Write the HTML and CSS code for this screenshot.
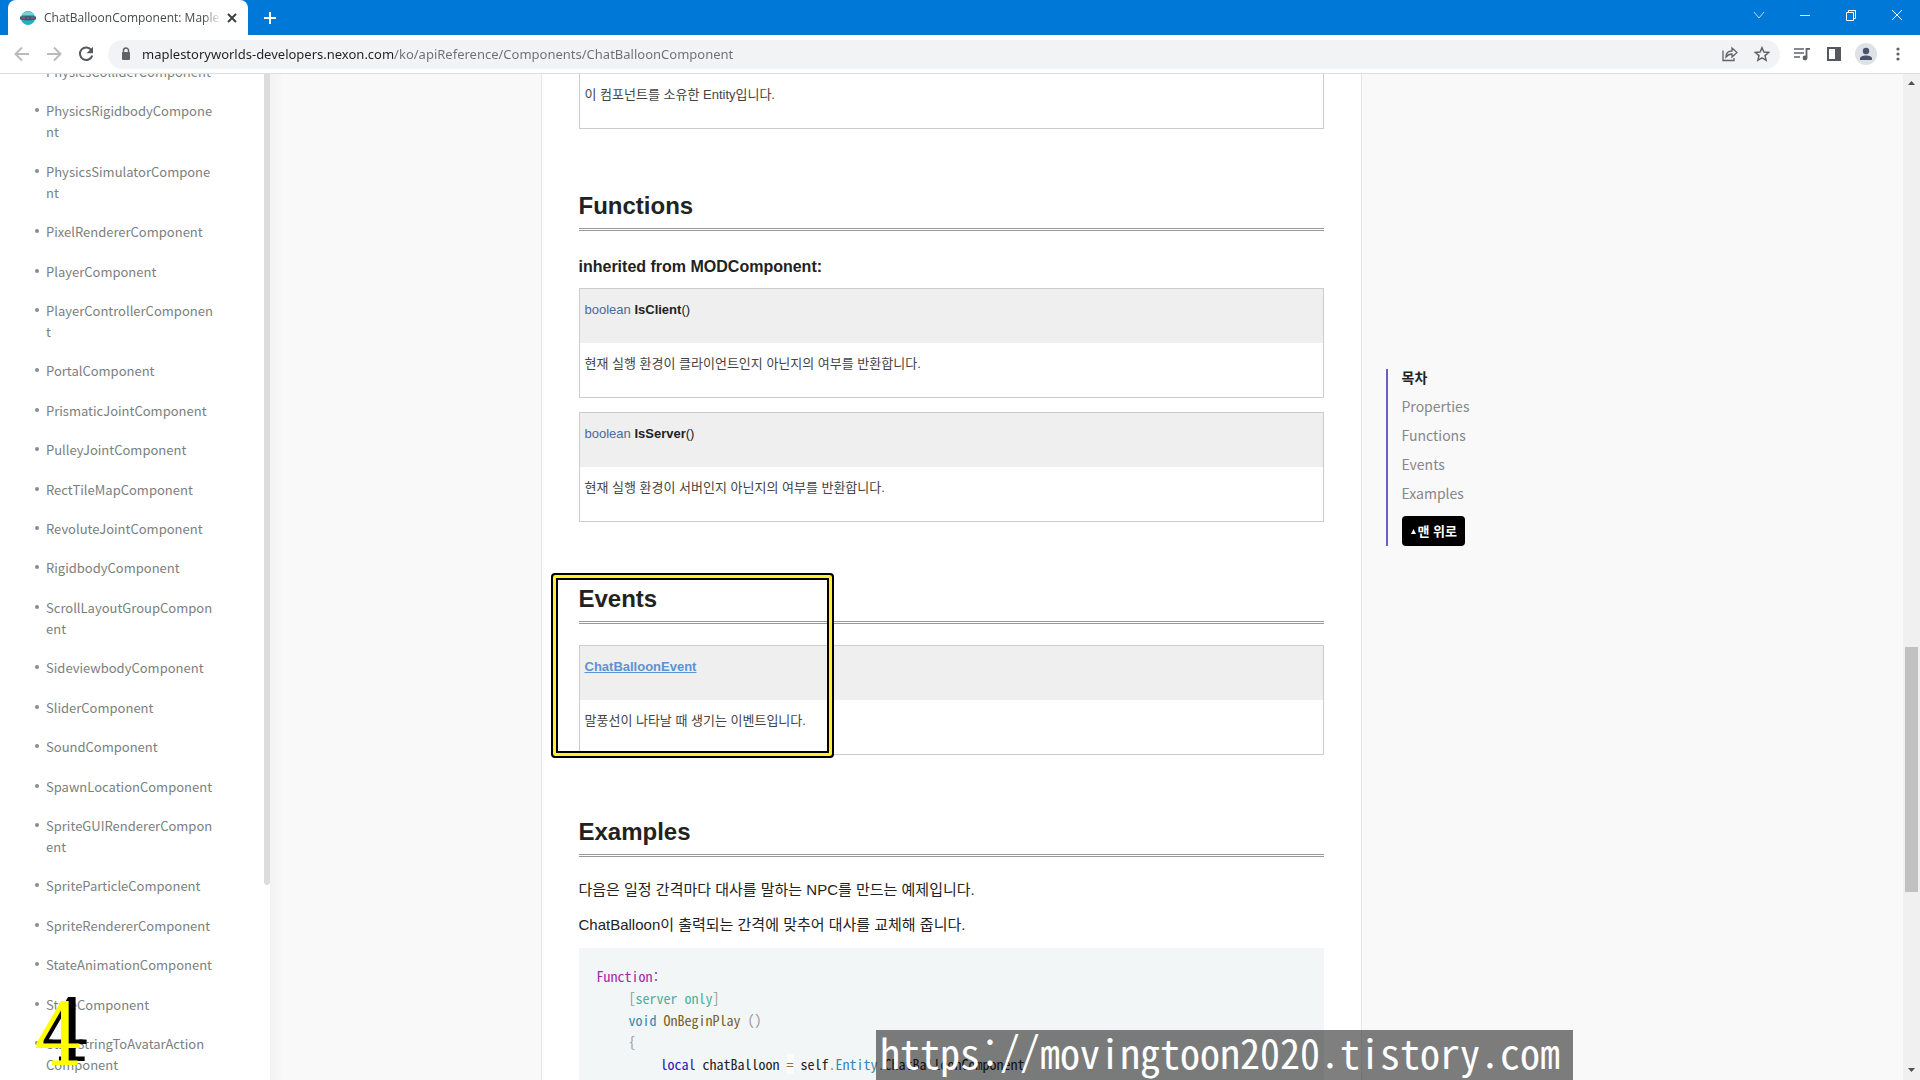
FILE: index.html
```html
<!DOCTYPE html>
<html lang="ko">
<head>
  <meta charset="UTF-8" />
  <meta name="viewport" content="width=device-width, initial-scale=1" />
  <title>ChatBalloonComponent: MapleStory Worlds</title>
  <link rel="stylesheet" href="styles.css">
</head>
<body>
  <header class="browser">
    <div class="titlebar">
      <div class="tab">
        <svg class="favicon" width="16" height="16" viewBox="0 0 16 16">
          <circle cx="8" cy="8" r="7" fill="#1fb4c4"/>
          <path d="M2 5a7 7 0 0 1 12 0z" fill="#6fd6c8"/>
          <path d="M0 6.500q8-1 16 0v3q-8 2-16 0z" fill="#3f5a73"/>
          <path d="M2 8h3M7 8h2M11 8h3" stroke="#8a5570" stroke-width="2"/>
        </svg>
        <span class="tab-title">ChatBalloonComponent: MapleS</span>
        <button class="tab-close" aria-label="탭 닫기">
          <svg width="10" height="10" viewBox="0 0 10 10"><path d="M1 1l8 8M9 1l-8 8" stroke="#3c4043" stroke-width="2"/></svg>
        </button>
      </div>
      <button class="new-tab" aria-label="새 탭">
        <svg width="12" height="12" viewBox="0 0 12 12"><path d="M6 0v12M0 6h12" stroke="#fff" stroke-width="2"/></svg>
      </button>
      <div class="window-buttons">
        <button aria-label="탭 검색"><svg width="12" height="12" viewBox="0 0 12 12"><path d="M1 3l5 6 5-6" fill="none" stroke="#b9dcf8"/></svg></button>
        <button aria-label="최소화"><svg width="12" height="12" viewBox="0 0 12 12"><path d="M1 6.500h10" stroke="#d5eafb"/></svg></button>
        <button aria-label="이전 크기로 복원"><svg width="12" height="12" viewBox="0 0 12 12"><path d="M1.500 3.500h7v8h-7zM3.500 3.500v-2h7v8h-2" fill="none" stroke="#fff"/></svg></button>
        <button aria-label="닫기"><svg width="12" height="12" viewBox="0 0 12 12"><path d="M1 1l10 10M11 1L1 11" stroke="#fff"/></svg></button>
      </div>
    </div>
    <div class="toolbar">
      <button class="tool" aria-label="뒤로"><svg width="16" height="16" viewBox="0 0 16 16"><path d="M15 8H2M8 1.500L1.500 8 8 14.500" fill="none" stroke="#b8babc" stroke-width="2"/></svg></button>
      <button class="tool" aria-label="앞으로"><svg width="16" height="16" viewBox="0 0 16 16"><path d="M1 8h13M8 1.500L14.500 8 8 14.500" fill="none" stroke="#b8babc" stroke-width="2"/></svg></button>
      <button class="tool" aria-label="새로고침"><svg width="16" height="16" viewBox="0 0 16 16"><path d="M13.500 4.200A6.300 6.300 0 1 0 14.300 9.500" fill="none" stroke="#55585c" stroke-width="2"/><path d="M15 .8v6.400H8.600z" fill="#55585c"/></svg></button>
      <div class="address">
        <svg width="16" height="16" viewBox="0 0 16 16"><rect x="4" y="6" width="8" height="8" rx="1" fill="#5f6368"/><path d="M5.500 7V4.500a2.500 2.500 0 0 1 5 0V7" fill="none" stroke="#5f6368" stroke-width="1.500"/></svg>
        <input class="url" type="text" aria-label="주소창" value="maplestoryworlds-developers.nexon.com/ko/apiReference/Components/ChatBalloonComponent">
        <button class="tool" aria-label="공유"><svg width="16" height="16" viewBox="0 0 16 16"><path d="M1 4.500v10h11V12M4 11c0-4 2-6 6-6V2l5 4.500-5 4.500V8c-3 0-4.500 1-6 3z" fill="none" stroke="#5f6368" stroke-width="1.300"/></svg></button>
        <button class="tool" aria-label="북마크"><svg width="16" height="16" viewBox="0 0 16 16"><path d="M8 1.700l1.900 4.400 4.700.4-3.600 3.100 1.100 4.700L8 11.800l-4.100 2.500L5 9.600 1.400 6.500l4.700-.4z" fill="none" stroke="#5f6368" stroke-width="1.500"/></svg></button>
      </div>
      <button class="tool" aria-label="미디어"><svg width="16" height="16" viewBox="0 0 16 16"><path d="M0 3h10M0 7h10M0 11h6" stroke="#5f6368" stroke-width="1.600"/><path d="M16 2.800h-3.500v9" fill="none" stroke="#5f6368" stroke-width="1.800"/><circle cx="11" cy="12" r="2.400" fill="#5f6368"/></svg></button>
      <button class="tool" aria-label="측면 패널"><svg width="16" height="16" viewBox="0 0 16 16"><path d="M1 1h14v14H1zM3 3v10h6V3z" fill="#55585f" fill-rule="evenodd"/></svg></button>
      <button class="tool" aria-label="프로필"><svg width="22" height="22" viewBox="0 0 22 22"><circle cx="11" cy="11" r="11" fill="#dee1e6"/><circle cx="11" cy="8" r="3.200" fill="#4a5369"/><path d="M5 17v-1.500c0-4 12-4 12 0V17z" fill="#4a5369"/></svg></button>
      <button class="tool" aria-label="메뉴"><svg width="16" height="16" viewBox="0 0 16 16"><circle cx="8" cy="3" r="1.600" fill="#5f6368"/><circle cx="8" cy="8" r="1.600" fill="#5f6368"/><circle cx="8" cy="13" r="1.600" fill="#5f6368"/></svg></button>
    </div>
  </header>

  <div class="page">
    <nav class="sidebar">
      <ul>
        <li><a href="#">PhysicsColliderComponent</a></li>
        <li><a href="#">PhysicsRigidbodyComponent</a></li>
        <li><a href="#">PhysicsSimulatorComponent</a></li>
        <li><a href="#">PixelRendererComponent</a></li>
        <li><a href="#">PlayerComponent</a></li>
        <li><a href="#">PlayerControllerComponent</a></li>
        <li><a href="#">PortalComponent</a></li>
        <li><a href="#">PrismaticJointComponent</a></li>
        <li><a href="#">PulleyJointComponent</a></li>
        <li><a href="#">RectTileMapComponent</a></li>
        <li><a href="#">RevoluteJointComponent</a></li>
        <li><a href="#">RigidbodyComponent</a></li>
        <li><a href="#">ScrollLayoutGroupComponent</a></li>
        <li><a href="#">SideviewbodyComponent</a></li>
        <li><a href="#">SliderComponent</a></li>
        <li><a href="#">SoundComponent</a></li>
        <li><a href="#">SpawnLocationComponent</a></li>
        <li><a href="#">SpriteGUIRendererComponent</a></li>
        <li><a href="#">SpriteParticleComponent</a></li>
        <li><a href="#">SpriteRendererComponent</a></li>
        <li><a href="#">StateAnimationComponent</a></li>
        <li><a href="#">StateComponent</a></li>
        <li><a href="#">StateStringToAvatarAction<wbr>Component</a></li>
      </ul>
      <div class="sidebar-thumb"></div>
    </nav>

    <main class="content">
      <article class="doc">
        <div class="entry entry-open">
          <p class="entry-desc">이 컴포넌트를 소유한 Entity입니다.</p>
        </div>

        <section>
          <h2>Functions</h2>
          <h3>inherited from MODComponent:</h3>
          <div class="entry">
            <div class="entry-head"><span class="type">boolean</span> <b>IsClient</b>()</div>
            <p class="entry-desc">현재 실행 환경이 클라이언트인지 아닌지의 여부를 반환합니다.</p>
          </div>
          <div class="entry">
            <div class="entry-head"><span class="type">boolean</span> <b>IsServer</b>()</div>
            <p class="entry-desc">현재 실행 환경이 서버인지 아닌지의 여부를 반환합니다.</p>
          </div>
        </section>

        <section class="events">
          <h2>Events</h2>
          <div class="entry">
            <div class="entry-head"><a href="#">ChatBalloonEvent</a></div>
            <p class="entry-desc">말풍선이 나타날 때 생기는 이벤트입니다.</p>
          </div>
          <div class="highlight"></div>
        </section>

        <section>
          <h2>Examples</h2>
          <p class="text">다음은 일정 간격마다 대사를 말하는 NPC를 만드는 예제입니다.</p>
          <p class="text">ChatBalloon이 출력되는 간격에 맞추어 대사를 교체해 줍니다.</p>
<pre class="code"><span class="c-label">Function:</span>
	<span class="c-punc">[</span><span class="c-attr">server only</span><span class="c-punc">]</span>
	<span class="c-type">void</span> <span class="c-func">OnBeginPlay</span> <span class="c-punc">()</span>
	<span class="c-punc">{</span>
		<span class="c-key">local</span> chatBalloon <span class="c-op">=</span> self<span class="c-punc">.</span><span class="c-type">Entity</span><span class="c-punc">.</span>ChatBalloonComponent
</pre>
        </section>
      </article>

      <aside class="toc">
        <strong>목차</strong>
        <a href="#">Properties</a>
        <a href="#">Functions</a>
        <a href="#">Events</a>
        <a href="#">Examples</a>
        <button class="to-top"><svg width="5" height="5" viewBox="0 0 5 5"><path d="M2.500 0L5 5H0z" fill="#fff"/></svg>맨 위로</button>
      </aside>
    </main>

    <div class="scrollbar">
      <svg width="7" height="4" viewBox="0 0 7 4"><path d="M3.500 0L7 4H0z" fill="#505050"/></svg>
      <div class="track"><div class="thumb"></div></div>
      <svg width="7" height="4" viewBox="0 0 7 4"><path d="M0 0h7L3.500 4z" fill="#505050"/></svg>
    </div>
  </div>

  <div class="step">4</div>
  <div class="watermark">https://movingtoon2020.tistory.com</div>
</body>
</html>
```
FILE: styles.css
```css
* {
  box-sizing: border-box;
}
body {
  margin: 0;
  height: 100vh;
  display: flex;
  flex-direction: column;
  overflow: hidden;
  position: relative;
  background: #fff;
  color: #222;
  font-family: "Liberation Sans", "Noto Sans CJK KR", sans-serif;
}
button {
  border: none;
  padding: 0;
  background: none;
  cursor: pointer;
}
svg {
  flex: none;
  display: block;
}

/* browser bars */
.titlebar {
  height: 35px;
  display: flex;
  background: #0078d7;
}
.tab {
  width: 240px;
  margin-left: 8px;
  padding: 0 11px 0 12px;
  display: flex;
  align-items: center;
  background: #fff;
  border-radius: 8px 8px 0 0;
}
.tab-title {
  flex: 1;
  margin: 0 6px 0 8px;
  overflow: hidden;
  white-space: nowrap;
  font: 12px/20px "Open Sans", sans-serif;
  color: #45494d;
  mask-image: linear-gradient(to right, #000 90%, transparent);
}
.new-tab {
  width: 44px;
  display: flex;
  justify-content: center;
  padding-top: 12px;
}
.window-buttons {
  margin-left: auto;
  display: flex;
}
.window-buttons button {
  width: 46px;
  height: 30px;
  display: flex;
  align-items: center;
  justify-content: center;
}
.toolbar {
  height: 39px;
  padding: 0 6px;
  display: flex;
  align-items: center;
  border-bottom: 1px solid #dcdee0;
  background: #fff;
}
.tool {
  width: 32px;
  height: 28px;
  display: flex;
  align-items: center;
  justify-content: center;
}
.address {
  flex: 1;
  height: 29px;
  margin: 0 6px;
  padding: 0 2px 0 10px;
  display: flex;
  align-items: center;
  background: #f1f3f4;
  border-radius: 15px;
}
.url {
  flex: 1;
  margin-left: 8px;
  padding: 0;
  border: none;
  outline: none;
  font: 13px/20px "Noto Sans", sans-serif;
  color: transparent;
  background: linear-gradient(to right, #202124 252px, #6b6f73 252px);
  -webkit-background-clip: text;
  background-clip: text;
}

/* page */
.page {
  flex: 1;
  min-height: 0;
  display: flex;
}
.sidebar {
  width: 270px;
  display: flex;
  justify-content: space-between;
  background: #fff;
  overflow: hidden;
}
.sidebar ul {
  width: 215px;
  margin: -13px 0 5px;
  padding: 0 0 0 46px;
  display: flex;
  flex-direction: column;
  justify-content: space-between;
  list-style: none;
}
.sidebar li {
  position: relative;
  line-height: 21px;
  overflow-wrap: anywhere;
}
.sidebar li::before {
  content: "";
  position: absolute;
  left: -11px;
  top: 8px;
  width: 4px;
  height: 4px;
  border-radius: 50%;
  background: #8a8d8d;
}
.sidebar a {
  font-family: "Noto Sans CJK KR", sans-serif;
  font-size: 13px;
  color: #7b8080;
  text-decoration: none;
}
.sidebar-thumb {
  width: 6px;
  margin-bottom: 195px;
  background: #dcdcdc;
  border-radius: 0 0 3px 3px;
}
.content {
  flex: 1;
  display: flex;
  justify-content: center;
  overflow: hidden;
  background: linear-gradient(to right, #f3f3f3, #f9f9f9 14px);
}
.doc {
  width: 821px;
  padding: 0 37px;
  background: #fff;
  border: 1px solid #e6e6e6;
  border-width: 0 1px;
}
section {
  margin-top: 63px;
}
h2 {
  margin: 0 0 21px;
  padding-bottom: 8px;
  border-bottom: 3px double #999;
  font-size: 24px;
  line-height: 28px;
}
h3 {
  margin: 26px 0 11px;
  font-size: 16px;
  line-height: 20px;
}
.entry {
  border: 1px solid #ccc;
  font-size: 13px;
  line-height: 20px;
}
.entry + .entry {
  margin-top: 14px;
}
.entry-open {
  border-top: none;
}
.entry-head,
.entry-desc {
  margin: 0;
  padding: 11px 5px 23px;
}
.entry-head {
  background: #efefef;
}
.entry-desc {
  color: #444;
}
.entry-head a {
  font-weight: bold;
  color: #5b93d3;
}
.type {
  color: #4a6a9c;
}
.events {
  position: relative;
}
.highlight {
  position: absolute;
  top: -12px;
  left: -28px;
  width: 283px;
  bottom: -3px;
  border: 2px solid #000;
  border-radius: 4px;
  box-shadow: inset 0 0 0 3px #fff12e, inset 0 0 0 5px #000;
}
.text {
  margin: 0 0 11px;
  font-size: 15px;
  line-height: 24px;
}
.code {
  margin: 0;
  padding: 17px 18px;
  background: #f3f6f7;
  font-family: "Noto Sans Mono CJK KR", "Liberation Mono", monospace;
  font-size: 14px;
  line-height: 22px;
  tab-size: 32px;
}
.c-label { color: #a626a4; }
.c-punc { color: #999; }
.c-attr { color: #4fae9a; }
.c-type { color: #3a87ad; }
.c-func { color: #795e26; }
.c-key { color: #2020c0; }
.c-op {
  color: #9a6e3a;
  background: #fbfbfa;
}

/* table of contents */
.toc {
  width: 247px;
  height: 177px;
  margin: 295px 0 0 24px;
  padding-left: 14px;
  display: flex;
  flex-direction: column;
  align-items: flex-start;
  gap: 13px;
  border-left: 2px solid #6a5fc5;
  font-family: "Noto Sans CJK KR", sans-serif;
  font-size: 14px;
  line-height: 16px;
}
.toc a {
  color: #85888c;
  text-decoration: none;
}
.to-top {
  height: 30px;
  margin-top: 2px;
  padding: 0 8px 0 9px;
  display: flex;
  align-items: center;
  gap: 2px;
  background: #000;
  border-radius: 4px;
  color: #fff;
  font: bold 13px/18px "Noto Sans CJK KR", sans-serif;
}

.scrollbar {
  width: 17px;
  padding: 7px 0 8px;
  display: flex;
  flex-direction: column;
  align-items: center;
  background: #f0f0f0;
}
.track {
  flex: 1;
  padding: 562px 0 176px;
  display: flex;
}
.thumb {
  width: 13px;
  background: #c1c1c1;
}

/* overlays */
.step {
  position: absolute;
  left: 34px;
  bottom: 0;
  font: 86px/90px "DejaVu Serif Condensed", "DejaVu Serif", serif;
  color: #ff0;
  text-shadow: 7px -4px #000;
}
.watermark {
  position: absolute;
  left: 876px;
  bottom: 0;
  width: 697px;
  height: 50px;
  padding-left: 4px;
  background: rgba(0, 0, 0, 0.5);
  font: 40px/44px "Noto Sans Mono CJK KR", "Liberation Mono", monospace;
  color: #fff;
}
```
